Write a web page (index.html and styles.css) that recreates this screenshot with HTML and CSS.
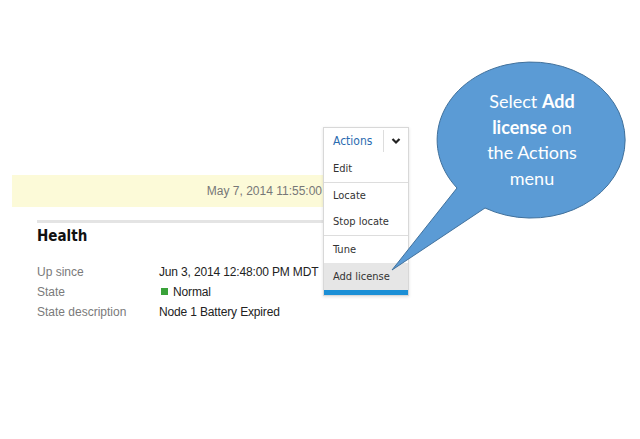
FILE: index.html
```html
<!DOCTYPE html>
<html lang="en">

<head>
    <meta charset="UTF-8">
    <meta name="viewport" content="width=device-width, initial-scale=1.0">
    <title>Node Health</title>
    <link rel="stylesheet" href="styles.css">
</head>

<body>
    <div class="page">
        <div class="banner">May 7, 2014 11:55:00</div>

        <div class="section">
            <h2 class="section-title">Health</h2>
            <div class="props">
                <div class="prop-label">Up since</div>
                <div class="prop-value">Jun 3, 2014 12:48:00 PM MDT</div>
                <div class="prop-label">State</div>
                <div class="prop-value"><span class="status-ok"></span>Normal</div>
                <div class="prop-label">State description</div>
                <div class="prop-value">Node 1 Battery Expired</div>
            </div>
        </div>

        <div class="menu">
            <div class="menu-head">
                <span class="menu-title">Actions</span>
                <span class="menu-toggle">
                    <svg width="10" height="8" viewBox="0 0 10 8">
                        <polyline points="1.5,2 5,5.5 8.5,2" fill="none" stroke="#222" stroke-width="2.2" />
                    </svg>
                </span>
            </div>
            <div class="menu-group first">
                <div class="menu-item">Edit</div>
            </div>
            <div class="menu-group">
                <div class="menu-item">Locate</div>
                <div class="menu-item">Stop locate</div>
            </div>
            <div class="menu-group">
                <div class="menu-item">Tune</div>
                <div class="menu-item active">Add license</div>
            </div>
        </div>

        <!-- callout -->
        <div class="callout">
            <svg class="callout-shape" width="240" height="220" viewBox="0 0 240 220">
                <path d="M 57 128
                         A 94 78 0 1 1 85 148
                         L -8 210 Z"
                      fill="#5b9bd5" stroke="#41719c" stroke-width="1" />
            </svg>
            <div class="callout-text">Select <b>Add</b><br><b>license</b> on<br>the Actions<br>menu</div>
        </div>
    </div>
</body>

</html>
```

FILE: styles.css
```css
body {
    margin: 0;
    font-family: "Liberation Sans", Arial, sans-serif;
    background: #ffffff;
}

.page {
    position: relative;
    width: 640px;
    height: 439px;
    overflow: hidden;
    padding-top: 175px;
    box-sizing: border-box;
}

.banner {
    margin-left: 12px;
    width: 311px;
    height: 32px;
    line-height: 32px;
    padding-right: 1px;
    box-sizing: border-box;
    text-align: right;
    background-color: #fcfad8;
    color: #777777;
    font-size: 12px;
    white-space: nowrap;
}

.section {
    margin-left: 37px;
    margin-top: 13px;
    width: 360px;
    border-top: 3px solid #e4e4e4;
}

.section-title {
    margin: 0;
    padding-top: 4px;
    height: 35px;
    font-family: "DejaVu Sans Condensed", "DejaVu Sans", sans-serif;
    font-weight: bold;
    font-size: 15px;
    color: #111111;
}

.props {
    display: grid;
    grid-template-columns: 122px auto;
    grid-auto-rows: 20px;
    font-size: 12px;
    line-height: 20px;
}

.prop-label {
    color: #7a7a7a;
}

.prop-value {
    color: #222222;
    letter-spacing: -0.15px;
}

.status-ok {
    display: inline-block;
    width: 7px;
    height: 7px;
    margin: 0 5px 1px 2px;
    background-color: #3aa23a;
}

.menu {
    position: absolute;
    left: 323px;
    top: 127px;
    width: 84px;
    background: #ffffff;
    border: 1px solid #d8d8d8;
    box-shadow: 0 1px 3px rgba(0, 0, 0, 0.12);
    font-family: "DejaVu Sans Condensed", "DejaVu Sans", sans-serif;
    font-size: 11px;
    color: #333333;
}

.menu-head {
    display: flex;
    height: 26px;
    align-items: center;
}

.menu-title {
    flex: 1;
    padding-left: 9px;
    color: #2b6cb0;
    font-size: 12px;
    line-height: 22px;
    border-right: 1px solid #dddddd;
}

.menu-toggle {
    width: 24px;
    display: flex;
    justify-content: center;
}

.menu-group {
    border-top: 1px solid #dddddd;
}

.menu-group.first {
    border-top: none;
    padding-top: 2px;
}

.menu-item {
    height: 26px;
    line-height: 26px;
    padding-left: 9px;
}

.menu-group + .menu-group + .menu-group .menu-item:first-child {
    height: 27px;
    line-height: 28px;
}

.menu-item.active {
    background-color: #e6e6e6;
    border-bottom: 5px solid #1b8fd6;
    height: 27px;
    line-height: 28px;
}

.callout {
    position: absolute;
    left: 400px;
    top: 60px;
    width: 240px;
    height: 220px;
}

.callout-shape {
    position: absolute;
    left: 0;
    top: 0;
    overflow: visible;
}

.callout-text {
    position: absolute;
    left: 72px;
    top: 29px;
    width: 120px;
    text-align: center;
    color: #ffffff;
    font-family: Lato, "Open Sans", sans-serif;
    font-size: 18px;
    line-height: 25.5px;
}
```
